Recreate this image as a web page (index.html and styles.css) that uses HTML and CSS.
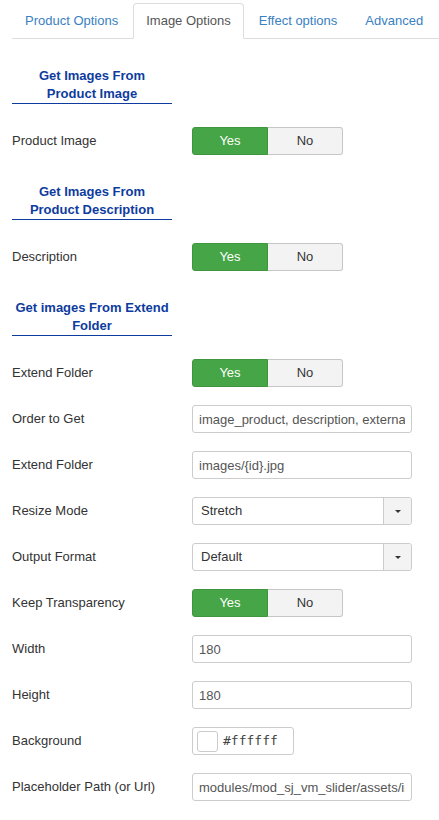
FILE: index.html
```html
<!DOCTYPE html>
<html lang="en">
<head>
    <meta charset="UTF-8">
    <meta name="viewport" content="width=device-width, initial-scale=1.0">
    <title>Module Options</title>
    <link rel="stylesheet" href="styles.css">
</head>
<body>
    <!-- Tabs -->
    <ul class="nav-tabs">
        <li><a href="#">Product Options</a></li>
        <li class="active"><a href="#">Image Options</a></li>
        <li><a href="#">Effect options</a></li>
        <li><a href="#">Advanced</a></li>
    </ul>

    <div class="tab-content">
        <div class="spacer">Get Images From<br>Product Image</div>
        <div class="control-group">
            <label class="control-label">Product Image</label>
            <div class="btn-group">
                <span class="btn btn-yes">Yes</span>
                <span class="btn btn-no">No</span>
            </div>
        </div>

        <div class="spacer">Get Images From<br>Product Description</div>
        <div class="control-group">
            <label class="control-label">Description</label>
            <div class="btn-group">
                <span class="btn btn-yes">Yes</span>
                <span class="btn btn-no">No</span>
            </div>
        </div>

        <div class="spacer">Get images From Extend<br>Folder</div>
        <div class="control-group">
            <label class="control-label">Extend Folder</label>
            <div class="btn-group">
                <span class="btn btn-yes">Yes</span>
                <span class="btn btn-no">No</span>
            </div>
        </div>
        <div class="control-group">
            <label class="control-label">Order to Get</label>
            <input class="input" type="text" value="image_product, description, external">
        </div>
        <div class="control-group">
            <label class="control-label">Extend Folder</label>
            <input class="input" type="text" value="images/{id}.jpg">
        </div>
        <div class="control-group">
            <label class="control-label">Resize Mode</label>
            <div class="select">
                <span class="select-value">Stretch</span>
                <span class="select-arrow"><b></b></span>
            </div>
        </div>
        <div class="control-group">
            <label class="control-label">Output Format</label>
            <div class="select">
                <span class="select-value">Default</span>
                <span class="select-arrow"><b></b></span>
            </div>
        </div>
        <div class="control-group">
            <label class="control-label">Keep Transparency</label>
            <div class="btn-group">
                <span class="btn btn-yes">Yes</span>
                <span class="btn btn-no">No</span>
            </div>
        </div>
        <div class="control-group">
            <label class="control-label">Width</label>
            <input class="input" type="text" value="180">
        </div>
        <div class="control-group">
            <label class="control-label">Height</label>
            <input class="input" type="text" value="180">
        </div>
        <div class="control-group">
            <label class="control-label">Background</label>
            <div class="color-input">
                <span class="swatch"></span>
                <span class="color-value">#ffffff</span>
            </div>
        </div>
        <div class="control-group">
            <label class="control-label">Placeholder Path (or Url)</label>
            <input class="input" type="text" value="modules/mod_sj_vm_slider/assets/images/nophoto.jpg">
        </div>
    </div>
</body>
</html>
```

FILE: styles.css
```css
body {
    margin: 0;
    padding: 3px 0 0 12px;
    font-family: "Liberation Sans", Arial, sans-serif;
    font-size: 13px;
    line-height: 18px;
    color: #333;
    background-color: #fff;
}

/* Tabs */
.nav-tabs {
    list-style: none;
    margin: 0;
    padding: 0;
    display: flex;
    border-bottom: 1px solid #ddd;
}

.nav-tabs li {
    margin-right: 2px;
    margin-bottom: -1px;
}

.nav-tabs a {
    display: block;
    padding: 8px 12px;
    line-height: 18px;
    border: 1px solid transparent;
    border-radius: 4px 4px 0 0;
    color: #3a7fc1;
    text-decoration: none;
}

.nav-tabs .active a {
    color: #555;
    background-color: #fff;
    border-color: #ddd #ddd transparent;
}

/* Form */
.tab-content {
    display: flex;
    flex-direction: column;
    padding-top: 18px;
}

.spacer {
    width: 160px;
    margin: 10px 0 23px;
    text-align: center;
    font-weight: bold;
    color: #0e3c9e;
    border-bottom: 1px solid #0e3c9e;
}

.control-group {
    display: flex;
    margin-bottom: 18px;
}

.control-label {
    width: 180px;
    flex: none;
    padding-top: 5px;
}

/* Yes / No toggle */
.btn-group {
    display: flex;
}

.btn {
    box-sizing: border-box;
    height: 28px;
    padding: 4px 0;
    text-align: center;
}

.btn-yes {
    width: 76px;
    background-color: #46a546;
    color: #fff;
    border: 1px solid #3d963d;
    border-radius: 3px 0 0 3px;
}

.btn-no {
    width: 75px;
    background-color: #f3f3f3;
    color: #333;
    border: 1px solid #c6c6c6;
    border-left: none;
    border-radius: 0 3px 3px 0;
}

/* Text inputs */
.input {
    box-sizing: border-box;
    width: 220px;
    height: 28px;
    margin: 0;
    padding: 4px 6px;
    border: 1px solid #ccc;
    border-radius: 3px;
    font-family: "Liberation Sans", Arial, sans-serif;
    font-size: 13px;
    line-height: 18px;
    color: #555;
    outline: none;
}

/* Select */
.select {
    box-sizing: border-box;
    width: 220px;
    height: 28px;
    display: flex;
    border: 1px solid #ccc;
    border-radius: 3px;
}

.select-value {
    flex: 1;
    padding: 4px 8px;
    color: #333;
}

.select-arrow {
    width: 27px;
    display: flex;
    align-items: center;
    justify-content: center;
    background-color: #f3f3f3;
    border-left: 1px solid #ccc;
    border-radius: 0 3px 3px 0;
}

.select-arrow b {
    width: 0;
    height: 0;
    border-left: 3px solid transparent;
    border-right: 3px solid transparent;
    border-top: 3px solid #333;
}

/* Colour picker */
.color-input {
    box-sizing: border-box;
    width: 102px;
    height: 28px;
    display: flex;
    align-items: center;
    padding-left: 4px;
    border: 1px solid #ccc;
    border-radius: 3px;
}

.swatch {
    box-sizing: border-box;
    width: 21px;
    height: 21px;
    margin-right: 5px;
    background-color: #fff;
    border: 1px solid #ccc;
    border-radius: 3px;
}

.color-value {
    font-family: "DejaVu Sans Mono", monospace;
    font-size: 13px;
    color: #444;
}
```
